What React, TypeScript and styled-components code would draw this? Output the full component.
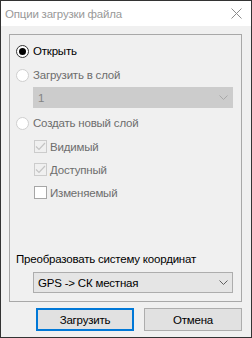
import styled, { createGlobalStyle } from 'styled-components';

const Global = createGlobalStyle`
  html, body {
    margin: 0;
    padding: 0;
    background: #f0f0f0;
  }
  body {
    font-family: "Liberation Sans", Arial, sans-serif;
    font-size: 11.5px;
    letter-spacing: -0.2px;
    color: #000;
  }
  * { box-sizing: border-box; }
`;

const Window = styled.div`
  width: 252px;
  height: 338px;
  border: 1px solid #333;
  background: #f0f0f0;
  display: flex;
  flex-direction: column;
`;

const TitleBar = styled.div`
  height: 25px;
  background: #fff;
  display: flex;
  align-items: center;
  justify-content: space-between;
  padding: 0 9px 0 4px;
  flex-shrink: 0;
`;

const Title = styled.span`
  color: #999;
  font-size: 11.5px;
`;

const Body = styled.div`
  flex: 1;
  display: flex;
  flex-direction: column;
  padding: 8px 9px 0 8px;
`;

const Group = styled.div`
  height: 268px;
  border: 1px solid #a8a8a8;
  display: flex;
  flex-direction: column;
  padding: 4px 6px 8px 6px;
`;

const OptionRow = styled.label<{ $indent?: number; $h?: number; $top?: number }>`
  height: ${({ $h }) => $h ?? 24}px;
  margin-top: ${({ $top }) => $top ?? 0}px;
  padding-left: ${({ $indent }) => $indent ?? 0}px;
  display: flex;
  align-items: center;
`;

const RadioDot = styled.span<{ $checked?: boolean; $disabled?: boolean }>`
  width: 13px;
  height: 13px;
  border-radius: 50%;
  border: 1px solid ${({ $disabled }) => ($disabled ? '#cfcfcf' : '#333')};
  background: #fff;
  display: flex;
  align-items: center;
  justify-content: center;
  margin-right: 4px;
  flex-shrink: 0;
  &::after {
    content: '';
    display: ${({ $checked }) => ($checked ? 'block' : 'none')};
    width: 7px;
    height: 7px;
    border-radius: 50%;
    background: #000;
  }
`;

const CheckBox = styled.span<{ $checked?: boolean }>`
  width: 13px;
  height: 13px;
  border: 1px solid ${({ $checked }) => ($checked ? '#cccccc' : '#a6a6a6')};
  background: ${({ $checked }) => ($checked ? '#f0f0f0' : '#fff')};
  margin-right: 3px;
  flex-shrink: 0;
  display: flex;
  align-items: center;
  justify-content: center;
`;

const OptionText = styled.span<{ $disabled?: boolean }>`
  color: ${({ $disabled }) => ($disabled ? '#6d6d6d' : '#000')};
  line-height: 16px;
`;

const Select = styled.div<{ $disabled?: boolean; $top?: number }>`
  margin-left: 17px;
  margin-top: ${({ $top }) => $top ?? 0}px;
  width: 200px;
  height: 21px;
  border: 1px solid ${({ $disabled }) => ($disabled ? '#cccccc' : '#adadad')};
  background: ${({ $disabled }) => ($disabled ? '#cccccc' : '#e5e5e5')};
  color: ${({ $disabled }) => ($disabled ? '#838383' : '#000')};
  display: flex;
  align-items: center;
  justify-content: space-between;
  padding: 0 4px 0 4px;
`;

const Spacer = styled.div`
  flex: 1;
`;

const FieldLabel = styled.div`
  height: 16px;
  line-height: 16px;
`;

const Buttons = styled.div`
  display: flex;
  gap: 10px;
  margin-top: 6px;
  padding-left: 27px;
`;

const Button = styled.button<{ $primary?: boolean }>`
  width: 98px;
  height: 23px;
  font: inherit;
  letter-spacing: inherit;
  color: #000;
  background: #e1e1e1;
  border: ${({ $primary }) => ($primary ? '2px solid #0078d7' : '1px solid #adadad')};
  padding: 0;
`;

function Chevron({ color }: { color: string }) {
  return (
    <svg width="9" height="5" viewBox="0 0 9 5">
      <polyline points="0.5,0.5 4.5,4.5 8.5,0.5" fill="none" stroke={color} strokeWidth="1" />
    </svg>
  );
}

function Check() {
  return (
    <svg width="11" height="11" viewBox="0 0 11 11">
      <polyline points="1,5.5 4,8.5 10,2" fill="none" stroke="#c4c4c4" strokeWidth="1.2" />
    </svg>
  );
}

export default function App() {
  return (
    <>
      <Global />
      <Window>
        <TitleBar>
          <Title>Опции загрузки файла</Title>
          <svg width="11" height="11" viewBox="0 0 11 11">
            <path d="M0.5 0.5 L10.5 10.5 M10.5 0.5 L0.5 10.5" stroke="#8c8c8c" strokeWidth="1" />
          </svg>
        </TitleBar>
        <Body>
          <Group>
            <OptionRow>
              <RadioDot $checked />
              <OptionText>Открыть</OptionText>
            </OptionRow>
            <OptionRow>
              <RadioDot $disabled />
              <OptionText $disabled>Загрузить в слой</OptionText>
            </OptionRow>
            <Select $disabled>
              <span>1</span>
              <Chevron color="#a8a8a8" />
            </Select>
            <OptionRow $top={3}>
              <RadioDot $disabled />
              <OptionText $disabled>Создать новый слой</OptionText>
            </OptionRow>
            <OptionRow $indent={18} $h={23}>
              <CheckBox $checked>
                <Check />
              </CheckBox>
              <OptionText $disabled>Видимый</OptionText>
            </OptionRow>
            <OptionRow $indent={18} $h={23}>
              <CheckBox $checked>
                <Check />
              </CheckBox>
              <OptionText $disabled>Доступный</OptionText>
            </OptionRow>
            <OptionRow $indent={18} $h={23}>
              <CheckBox />
              <OptionText $disabled>Изменяемый</OptionText>
            </OptionRow>
            <Spacer />
            <FieldLabel>Преобразовать систему координат</FieldLabel>
            <Select $top={5}>
              <span>GPS -&gt; СК местная</span>
              <Chevron color="#606060" />
            </Select>
          </Group>
          <Buttons>
            <Button $primary>Загрузить</Button>
            <Button>Отмена</Button>
          </Buttons>
        </Body>
      </Window>
    </>
  );
}
